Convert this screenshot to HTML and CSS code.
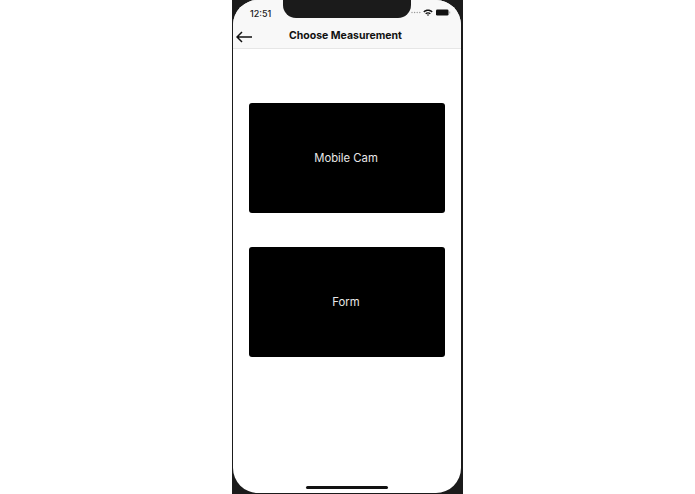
FILE: index.html
```html
<!DOCTYPE html>
<html lang="en">
<head>
    <meta charset="UTF-8">
    <meta name="viewport" content="width=device-width, initial-scale=1.0">
    <title>Choose Measurement</title>
    <link rel="stylesheet" href="styles.css">
</head>
<body>
    <div class="phone">
        <div class="screen">
            <div class="notch"></div>
            <header class="top-bar">
                <div class="status-bar">
                    <span class="time">12:51</span>
                    <div class="status-icons">
                        <svg class="signal" width="11" height="3" viewBox="0 0 11 3">
                            <circle cx="1" cy="1.5" r="0.7"/>
                            <circle cx="3.6" cy="1.5" r="0.7"/>
                            <circle cx="6.2" cy="1.5" r="0.7"/>
                            <circle cx="8.8" cy="1.5" r="0.7"/>
                        </svg>
                        <svg class="wifi" width="10" height="7" viewBox="0 0 10 7">
                            <path d="M0.3 2.4C3 -0.2 7 -0.2 9.7 2.4L8.6 3.5C6.5 1.5 3.5 1.5 1.4 3.5Z"/>
                            <path d="M2.2 4.2C3.8 2.8 6.2 2.8 7.8 4.2L6.8 5.2C5.7 4.3 4.3 4.3 3.2 5.2Z"/>
                            <path d="M3.9 5.8C4.5 5.3 5.5 5.3 6.1 5.8L5 7Z"/>
                        </svg>
                        <svg class="battery" width="15" height="7" viewBox="0 0 15 7">
                            <rect x="0" y="0.5" width="12.5" height="6" rx="1.3"/>
                            <rect class="battery-cap" x="13.2" y="2.5" width="1" height="2"/>
                        </svg>
                    </div>
                </div>
                <div class="nav-bar">
                    <svg class="back" width="16" height="12" viewBox="0 0 16 12">
                        <path d="M6 1L1 6L6 11M1 6H16"/>
                    </svg>
                    <h1>Choose Measurement</h1>
                </div>
            </header>
            <main class="options">
                <button class="option">Mobile Cam</button>
                <button class="option">Form</button>
            </main>
            <div class="home-bar"></div>
        </div>
    </div>
</body>
</html>
```

FILE: styles.css
```css
body {
    margin: 0;
    height: 494px;
    background-color: #fff;
    font-family: Inter, "Liberation Sans", sans-serif;
    display: flex;
    justify-content: center;
    overflow: hidden;
}
.phone {
    width: 231px;
    height: 494px;
    background-color: #1b1b1b;
    padding: 0 2px 1px 1px;
    box-sizing: border-box;
}
.screen {
    position: relative;
    height: 100%;
    background-color: #fff;
    border-radius: 25px;
    overflow: hidden;
    display: flex;
    flex-direction: column;
}
.notch {
    position: absolute;
    top: 0;
    left: 50px;
    width: 128px;
    height: 18px;
    background-color: #1b1b1b;
    border-radius: 0 0 13px 13px;
}
.top-bar {
    height: 48px;
    background-color: #f8f8f8;
    border-bottom: 1px solid #e6e6e6;
    flex-shrink: 0;
}
.status-bar {
    height: 24px;
    display: flex;
    justify-content: space-between;
    align-items: center;
    padding: 2px 10px 0 17px;
    box-sizing: border-box;
}
.time {
    font-size: 9px;
    font-weight: 500;
    color: #222;
}
.status-icons {
    display: flex;
    align-items: center;
    gap: 3px;
    margin-bottom: 2px;
}
.signal {
    fill: #999;
    margin-right: -2px;
}
.wifi {
    fill: #111;
}
.battery {
    fill: #111;
}
.battery-cap {
    fill: #aaa;
}
.nav-bar {
    position: relative;
    height: 24px;
    box-sizing: border-box;
    display: flex;
    align-items: center;
    justify-content: center;
    padding: 0 3px 1px 0;
}
.nav-bar h1 {
    margin: 0;
    font-size: 10.5px;
    font-weight: 700;
    color: #111;
}
.back {
    position: absolute;
    left: 3px;
    top: 7px;
    fill: none;
    stroke: #111;
    stroke-width: 1.5;
}
.options {
    display: flex;
    flex-direction: column;
    gap: 34px;
    padding: 54px 16px 0;
}
.option {
    height: 110px;
    background-color: #000;
    color: #e8e8e8;
    border: none;
    border-radius: 3px;
    font-family: inherit;
    font-size: 11.3px;
    padding: 0 2px 0 0;
}
.home-bar {
    position: absolute;
    left: 73px;
    bottom: 4px;
    width: 82px;
    height: 3px;
    background-color: #111;
    border-radius: 2px;
}
```
